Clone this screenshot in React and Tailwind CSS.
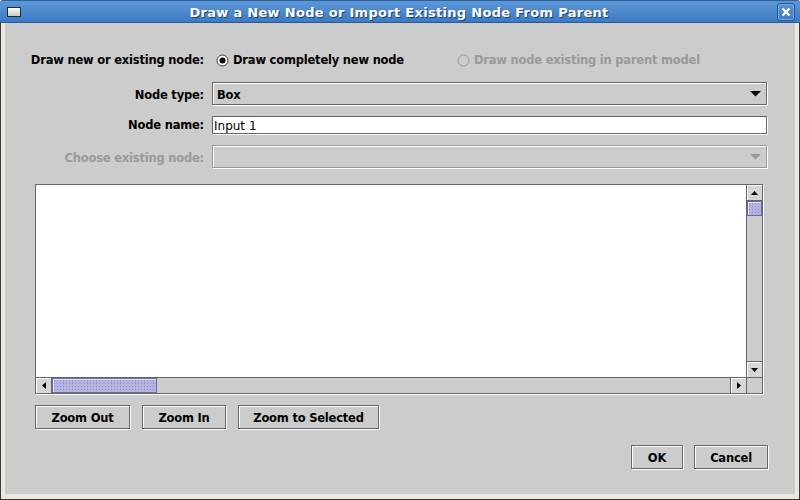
const etched = "border border-[#666666] shadow-[1px_1px_0_#ffffff,inset_1px_1px_0_#ffffff]";
const bold = "font-bold text-[11.5px] tracking-[-0.2px]";

function Radio({ checked, disabled, label }) {
  return (
    <div className="flex items-center gap-[4px]">
      <svg width="13" height="13" viewBox="0 0 13 13">
        <circle cx="6.5" cy="6.5" r="5.5" fill={disabled ? "#cccccc" : "#ffffff"} stroke={disabled ? "#999999" : "#333333"} strokeWidth="1" />
        {checked && <circle cx="6.5" cy="6.5" r="3" fill="#000000" />}
      </svg>
      <span className={`translate-y-[1px] ${disabled ? "text-[#999999]" : "text-black"}`}>{label}</span>
    </div>
  );
}

function Arrow({ dir, color = "#000000" }) {
  const pts = {
    up: "0,4 7,4 3.5,0",
    down: "0,0 7,0 3.5,4",
    left: "4,0 4,7 0,3.5",
    right: "0,0 0,7 4,3.5",
  }[dir];
  const w = dir === "up" || dir === "down" ? 7 : 4;
  const h = dir === "up" || dir === "down" ? 4 : 7;
  return (
    <svg width={w} height={h} viewBox={`0 0 ${w} ${h}`}>
      <polygon points={pts} fill={color} />
    </svg>
  );
}

function Combo({ value, disabled }) {
  return (
    <div
      className={`w-[555px] h-[23px] flex items-center justify-between pl-[4px] pr-[5px] ${
        disabled
          ? "border border-[#999999] shadow-[1px_1px_0_#ffffff,inset_1px_1px_0_#ffffff]"
          : etched
      }`}
    >
      <span className={`${bold} translate-y-[2px]`}>{value}</span>
      <svg width="11" height="6" viewBox="0 0 11 6">
        <polygon points="0,0 11,0 5.5,5.5" fill={disabled ? "#999999" : "#000000"} />
      </svg>
    </div>
  );
}

function Button({ label, w }) {
  return (
    <div className={`${w} h-[24px] ${etched} flex items-center justify-center ${bold}`}>
      <span className="translate-y-[2px]">{label}</span>
    </div>
  );
}

function ScrollBtn({ dir, cls }) {
  return (
    <div className={`flex items-center justify-center bg-[#d6d6d6] shadow-[inset_1px_1px_0_#ffffff] ${cls}`}>
      <Arrow dir={dir} />
    </div>
  );
}

const thumb =
  "bg-[#b4b4e0] border border-[#6a6aa0] bg-[radial-gradient(#8a8ac0_0.7px,transparent_0.8px)] bg-[length:3px_3px] shadow-[inset_1px_1px_0_#e6e6ff]";

export default function App() {
  return (
    <div className="w-[800px] h-[500px] flex flex-col overflow-hidden bg-[#ebe8e2] font-['DejaVu_Sans',sans-serif] text-[12px] text-black">
      <div className="h-[23px] shrink-0 flex items-center relative bg-gradient-to-b from-[#5c97d7] to-[#3d7ac2] border-t border-[#2f609a] border-b border-b-[#2c5a8f] rounded-t-[3px]">
        <div className="ml-[7px] w-[14px] h-[10px] border border-[#1f2a38] bg-gradient-to-b from-[#ffffff] to-[#c9c9c9]" />
        <div className="flex-1 text-center text-white font-bold text-[13px] [text-shadow:1px_1px_0_#1f4270] tracking-[0.3px] translate-y-[1px]">
          Draw a New Node or Import Existing Node From Parent
        </div>
        <div className="mr-[5px] w-[18px] h-[18px] rounded-[3px] border border-[#27548a] shadow-[inset_0_0_0_1px_#7aa9dd] flex items-center justify-center">
          <svg width="10" height="10" viewBox="0 0 10 10">
            <path d="M1.5 1.5 L8.5 8.5 M8.5 1.5 L1.5 8.5" stroke="#ffffff" strokeWidth="2.4" />
          </svg>
        </div>
      </div>

      <div className="flex-1 flex border-x border-b border-[#3a3935] px-[4px] pb-[5px]">
        <div className="flex-1 bg-[#cccccc] flex flex-col">
          <div className="mt-[26px] h-[22px] flex items-center">
            <div className={`w-[199px] text-right ${bold} translate-y-[1px]`}>Draw new or existing node:</div>
            <div className={`ml-[12px] ${bold}`}>
              <Radio checked label="Draw completely new node" />
            </div>
            <div className={`ml-[53px] ${bold}`}>
              <Radio disabled label="Draw node existing in parent model" />
            </div>
          </div>

          <div className="mt-[11px] flex items-center">
            <div className={`w-[199px] text-right ${bold} translate-y-[2px]`}>Node type:</div>
            <div className="ml-[8px]">
              <Combo value="Box" />
            </div>
          </div>

          <div className="mt-[11px] flex items-center">
            <div className={`w-[199px] text-right ${bold} translate-y-[1px]`}>Node name:</div>
            <div className={`ml-[8px] w-[555px] h-[18px] bg-white ${etched} flex items-center pl-[1px]`}>
              <span className="translate-y-[1px]">Input 1</span>
            </div>
          </div>

          <div className="mt-[11px] flex items-center">
            <div className={`w-[199px] text-right ${bold} text-[#999999] translate-y-[2px]`}>Choose existing node:</div>
            <div className="ml-[8px]">
              <Combo value="" disabled />
            </div>
          </div>

          <div className="mt-[16px] ml-[30px] w-[728px] h-[210px] flex flex-col border border-[#666666] shadow-[1px_1px_0_#ffffff]">
            <div className="flex-1 flex">
              <div className="flex-1 bg-white" />
              <div className="w-[16px] flex flex-col border-l border-[#666666] bg-[#cccccc]">
                <ScrollBtn dir="up" cls="h-[16px] border-b border-[#666666]" />
                <div className={`h-[15px] ${thumb}`} />
                <div className="flex-1" />
                <ScrollBtn dir="down" cls="h-[16px] border-t border-[#666666]" />
              </div>
            </div>
            <div className="h-[16px] flex border-t border-[#666666]">
              <div className="flex-1 flex bg-[#cccccc]">
                <ScrollBtn dir="left" cls="w-[16px] border-r border-[#666666]" />
                <div className={`w-[105px] ${thumb}`} />
                <div className="flex-1" />
                <ScrollBtn dir="right" cls="w-[16px] border-l border-[#666666]" />
              </div>
              <div className="w-[16px] bg-[#cccccc] border-l border-[#666666]" />
            </div>
          </div>

          <div className="mt-[11px] ml-[30px] flex gap-[12px]">
            <Button label="Zoom Out" w="w-[95px]" />
            <Button label="Zoom In" w="w-[84px]" />
            <Button label="Zoom to Selected" w="w-[141px]" />
          </div>

          <div className="mt-[16px] flex justify-end gap-[11px] pr-[27px]">
            <Button label="OK" w="w-[52px]" />
            <Button label="Cancel" w="w-[74px]" />
          </div>
        </div>
      </div>
    </div>
  );
}
